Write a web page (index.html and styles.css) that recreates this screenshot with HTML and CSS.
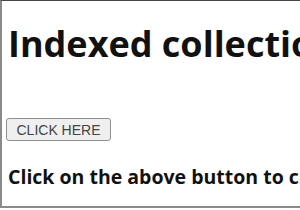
FILE: index.html
```html
<!DOCTYPE html>
<html lang="en">
  <head>
    <meta charset="UTF-8" />
    <meta name="viewport" content="width=device-width, initial-scale=1.0" />
    <title>Indexed collection</title>
    <link rel="stylesheet" href="styles.css">
  </head>
  <body>
    <div class="frame">
      <h1 class="title">Indexed collection</h1>
      <button class="click">CLICK HERE</button>
      <p class="info">Click on the above button to create an indexed collection</p>
    </div>
  </body>
</html>
```

FILE: styles.css
```css
body {
  margin: 0;
  background-color: white;
}
.frame {
  height: 205px;
  border-top: 1px solid #444;
  border-left: 2px solid #8a8a8a;
  border-bottom: 2px solid #8a8a8a;
  padding-left: 6px;
  overflow: hidden;
  white-space: nowrap;
  font-family: "Open Sans", sans-serif;
  color: #111;
}
.title {
  margin: 21px 0 0;
  font-size: 36px;
  line-height: 44px;
}
.click {
  display: block;
  margin: 52px 0 0 -2px;
  width: 105px;
  height: 23px;
  padding: 0;
  font-family: "Liberation Sans", sans-serif;
  font-size: 14px;
  color: #444;
  background-color: #efefef;
  border: 1px solid #8f8f8f;
  border-radius: 3px;
}
.info {
  margin: 24px 0 0;
  font-size: 19.5px;
  font-weight: bold;
  line-height: 24px;
}
```
